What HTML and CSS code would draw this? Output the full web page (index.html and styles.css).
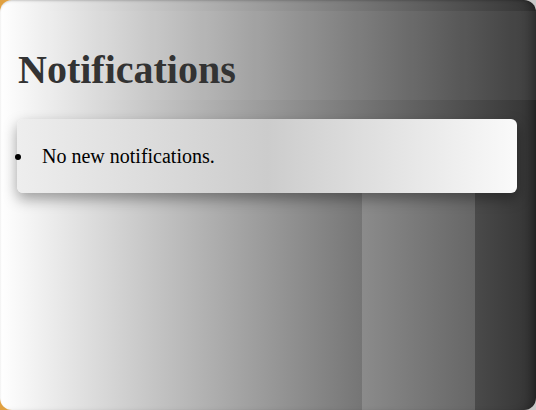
FILE: index.html
```html
<!DOCTYPE html>
<html>
<head>
<meta charset="utf-8">
<link rel="stylesheet" href="styles.css">
</head>
<body>
<div class="panel">
  <header class="panel-head"><h1 class="title">Notifications</h1></header>
  <ul class="notes">
    <li class="note">No new notifications.</li>
  </ul>
</div>
</body>
</html>
```
FILE: styles.css
```css
html, body {
  margin: 0;
  padding: 0;
}
body {
  background: linear-gradient(to right, #e0a040, #c8c8c8);
  font-family: "Liberation Serif", "Times New Roman", serif;
  width: 536px;
  height: 410px;
  overflow: hidden;
}
.panel {
  box-sizing: border-box;
  width: 536px;
  height: 410px;
  border-radius: 12px;
  padding-top: 11px;
  background:
    linear-gradient(to right, #8b8b8b, #666) 362px 193px / 113px 217px no-repeat,
    linear-gradient(to right, #ffffff, #333333);
  box-shadow: inset -10px 0 10px -6px rgba(0,0,0,0.35), inset 0 1px 2px rgba(0,0,0,0.15);
}
.panel-head {
  height: 89px;
  box-sizing: border-box;
  padding: 36px 18px 0;
  background: rgba(255,255,255,0.05);
}
.title {
  margin: 0;
  font-size: 40px;
  line-height: 46px;
  font-weight: bold;
  color: #333;
}
.notes {
  list-style: disc;
  margin: 19px 19px 0 17px;
  padding: 26px 25px 25px 0;
  border-radius: 6px;
  background: linear-gradient(to right, #eeeeee, #cccccc 50%, #fafafa);
  box-shadow: 0 6px 14px rgba(0,0,0,0.35);
}
.note {
  margin-left: 17px;
  padding-left: 8px;
  font-size: 20px;
  line-height: 23px;
  color: #000;
}
```
